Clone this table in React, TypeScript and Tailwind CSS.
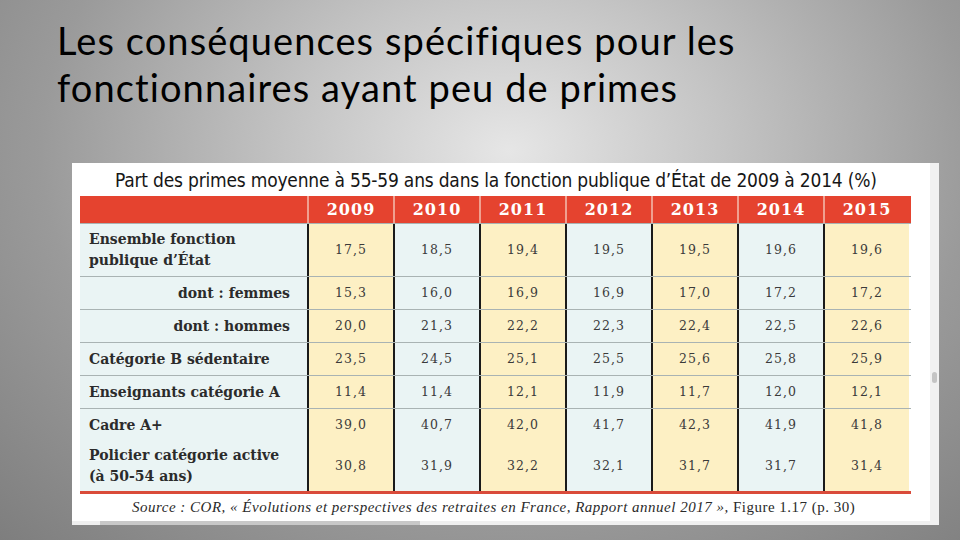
const years = ['2009', '2010', '2011', '2012', '2013', '2014', '2015']

type Row = {
  label: string[]
  values: string[]
  h: string
  right?: boolean
  noTop?: boolean
}

const rows: Row[] = [
  { label: ['Ensemble fonction', 'publique d’État'], values: ['17,5', '18,5', '19,4', '19,5', '19,5', '19,6', '19,6'], h: 'h-[53px]' },
  { label: ['dont : femmes'], values: ['15,3', '16,0', '16,9', '16,9', '17,0', '17,2', '17,2'], h: 'h-[33px]', right: true },
  { label: ['dont : hommes'], values: ['20,0', '21,3', '22,2', '22,3', '22,4', '22,5', '22,6'], h: 'h-[33px]', right: true },
  { label: ['Catégorie B sédentaire'], values: ['23,5', '24,5', '25,1', '25,5', '25,6', '25,8', '25,9'], h: 'h-[33px]' },
  { label: ['Enseignants catégorie A'], values: ['11,4', '11,4', '12,1', '11,9', '11,7', '12,0', '12,1'], h: 'h-[33px]' },
  { label: ['Cadre A+'], values: ['39,0', '40,7', '42,0', '41,7', '42,3', '41,9', '41,8'], h: 'h-[33px]' },
  { label: ['Policier catégorie active', '(à 50-54 ans)'], values: ['30,8', '31,9', '32,2', '32,1', '31,7', '31,7', '31,4'], h: 'h-[50px]', noTop: true },
]

const serif = { fontFamily: '"DejaVu Serif", "Liberation Serif", serif' }

function DataRow({ row }: { row: Row }) {
  return (
    <div className={`flex ${row.h} ${row.noTop ? '' : 'border-t border-[#a9b3b3]'}`}>
      <div
        className={`flex w-[227px] flex-col justify-center bg-[#eaf4f4] text-[14px] font-bold leading-[21px] text-[#2b2b2b] ${row.right ? 'items-end pr-[17px]' : 'pl-[9px]'}`}
        style={serif}
      >
        {row.label.map((l) => (
          <span key={l}>{l}</span>
        ))}
      </div>
      {row.values.map((v, i) => (
        <div
          key={i}
          className={`flex w-[86px] items-center justify-center border-l-2 border-[#1a1a1a] text-[12.5px] tracking-[1px] text-[#3a3a3a] ${i % 2 === 0 ? 'bg-[#fdf0c4]' : 'bg-[#eaf4f4]'}`}
          style={serif}
        >
          {v}
        </div>
      ))}
    </div>
  )
}

export default function App() {
  return (
    <div className="relative h-[540px] w-[960px] overflow-hidden bg-[radial-gradient(ellipse_at_53%_28%,#e6e6e6_0%,#c4c4c4_30%,#9a9a9a_65%,#7e7e7e_100%)]">
      <div
        className="pl-[57px] pt-[17px] text-[38px] leading-[47px] tracking-[1.1px] text-black"
        style={{ fontFamily: 'Lato, "Open Sans", sans-serif', fontVariantLigatures: 'none' }}
      >
        <div>Les conséquences spécifiques pour les</div>
        <div>fonctionnaires ayant peu de primes</div>
      </div>

      <div className="ml-[72px] mt-[52px] flex h-[362px] w-[867px] bg-white">
        <div className="flex flex-1 flex-col">
          <div
            className="flex h-[37px] items-center pl-[43px] pt-[2px] text-[19px] font-medium tracking-[-0.2px] text-[#161616]"
            style={{ fontFamily: '"Liberation Sans Narrow", "DejaVu Sans Condensed", Roboto, sans-serif', fontStretch: 'condensed' }}
          >
            Part des primes moyenne à 55-59 ans dans la fonction publique d’État de 2009 à 2014 (%)
          </div>

          <div className="ml-[8px] w-[831px]">
            <div className="flex h-[27px] bg-[#e5432f]">
              <div className="w-[227px]" />
              {years.map((y) => (
                <div
                  key={y}
                  className="flex w-[86px] items-center justify-center border-l-2 border-[#f0a090] text-[16px] font-bold tracking-[1px] text-white"
                  style={serif}
                >
                  {y}
                </div>
              ))}
            </div>
            {rows.map((r, i) => (
              <DataRow key={i} row={r} />
            ))}
            <div className="h-[3px] bg-[#d94b3a]" />
          </div>

          <div
            className="flex h-[30px] items-center pl-[60px] text-[15px] tracking-[0.5px] text-[#2a2a2a]"
            style={{ fontFamily: '"Liberation Serif", serif' }}
          >
            <span className="italic">Source : COR, « Évolutions et perspectives des retraites en France, Rapport annuel 2017 »,</span>
            <span>&nbsp;Figure 1.17 (p. 30)</span>
          </div>

          <div className="mt-auto h-[5px] bg-[#efefef]">
            <div className="ml-[28px] h-full w-[320px] bg-[#c8c8c8]" />
          </div>
        </div>

        <div className="relative w-[9px] bg-[#f1f1f1]">
          <div className="absolute left-[2px] top-[209px] h-[11px] w-[5px] rounded-sm bg-[#c4c4c4]" />
        </div>
      </div>
    </div>
  )
}
